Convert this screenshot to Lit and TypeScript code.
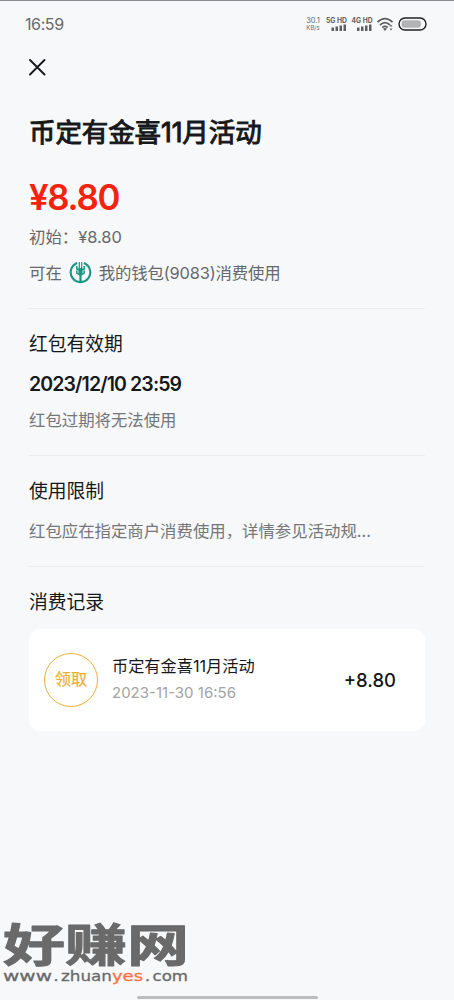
import { LitElement, html, css, svg } from "lit";
import { customElement } from "lit/decorators.js";

@customElement("status-bar")
class StatusBar extends LitElement {
  static styles = css`
    :host { display: flex; height: 47px; box-sizing: border-box; border-top: 1px solid #8b8b90; padding: 0 26px 0 25px; align-items: center; color: #68696b; }
    .time { font-size: 16px; letter-spacing: -0.4px; flex: 1; }
    .speed { font-size: 7.5px; line-height: 7px; width: 16px; text-align: center; margin-right: 5px; white-space: nowrap; }
    .unit { font-size: 6px; }
    svg { display: block; }
    .net { font-weight: 700; }
  `;
  signal(label: string, x: number) {
    return svg`<g transform="translate(${x} 0)" fill="#5e5f61">
      <text class="net" x="0" y="6.500" font-size="7" textLength="21" lengthAdjust="spacingAndGlyphs">${label} HD</text>
      <path d="M5.500 11.500h2.500v3.500h-2.500zM9.500 10.500h2.500v4.500h-2.500zM13.500 9.500h2.500v5.500h-2.500zM17.500 8.500h2.500v6.500h-2.500z"/></g>`;
  }
  render() {
    return html`<div class="time">16:59</div>
      <div class="speed">30.1<div class="unit">KB/s</div></div>
      <svg width="102" height="16" viewBox="0 0 102 16">
        ${this.signal("5G", 0)}${this.signal("4G", 25.5)}
        <g fill="none" stroke="#5e5f61" stroke-width="1.700">
          <path d="M51.500 6.200Q59 -0.800 66.500 6.200M54 9Q59 4.400 64 9M56.300 11.500Q59 9.200 61.700 11.500"/>
        </g>
        <path d="M57 12.700Q59 11.300 61 12.700L59 15z" fill="#5e5f61"/>
        <path d="M63.500 10.500l1.500-2 1.500 2zM63.500 12.500l1.500 2 1.500-2z" fill="#5e5f61"/>
        <rect x="73" y="2" width="27" height="12" rx="6" fill="none" stroke="#202022" stroke-width="1.400"/>
        <rect x="75.500" y="4.200" width="19.500" height="7.600" rx="3" fill="#b4b4b6"/>
      </svg>`;
  }
}

@customElement("bank-mark")
class BankMark extends LitElement {
  static styles = css`:host { display: block; width: 23px; height: 23px; margin-top: -2px; } svg { display: block; }`;
  render() {
    return html`<svg width="23" height="23" viewBox="0 0 23 23" fill="none" stroke="#17977f">
      <path d="M8.200 2.100A9.800 9.800 0 1 0 14.800 2.100" stroke-width="2.100"/>
      <path d="M11.500 14V21" stroke-width="2.200"/>
      <path d="M10.300 1V8M12.700 1V8" stroke-width="1.200"/>
      <path d="M7.800 5V8L10 9.200M15.200 5V8L13 9.200M7.800 9.500V12L10 13.500M15.200 9.500V12L13 13.500" stroke-width="1.500"/>
      <path d="M9.500 7h4v6.500l-2 2-2-2z" fill="#17977f" stroke="none"/>
    </svg>`;
  }
}

@customElement("site-watermark")
class SiteWatermark extends LitElement {
  static styles = css`
    :host { display: block; width: 190px; height: 68px; }
    svg { display: block; overflow: visible; }
    .name { font: 700 45.500px "Liberation Sans", "Noto Sans CJK SC", sans-serif; }
    .url { font: 400 14.500px "DejaVu Sans", sans-serif; }
  `;
  part2(text: string, x: number, width: number, color = "#6a6a6a") {
    return svg`<text class="url" x=${x} y="61" textLength=${width} lengthAdjust="spacingAndGlyphs" fill=${color} stroke=${color} stroke-width="0.300">${text}</text>`;
  }
  render() {
    return html`<svg width="190" height="68" viewBox="0 0 190 68" fill="#6a6a6a">
      <text class="name" x="3" y="42" textLength="186" lengthAdjust="spacingAndGlyphs" stroke="#6a6a6a" stroke-width="1" stroke-linejoin="round">好赚网</text>
      ${this.part2("www", 3, 49)}${this.part2(".", 53.5, 5)}${this.part2("zhuan", 61, 51)}
      ${this.part2("yes", 112, 31, "#ff7044")}${this.part2(".", 145, 5)}${this.part2("com", 152.5, 35.5)}
    </svg>`;
  }
}

@customElement("app-root")
class AppRoot extends LitElement {
  static styles = css`
    :host { display: flex; flex-direction: column; position: relative; height: 1000px; overflow: hidden; background: #f6f8fa; color: #17181a; font-family: Inter, "Noto Sans CJK SC", sans-serif; white-space: nowrap; }
    .close { display: block; margin: 12px 0 0 29px; }
    main { padding: 0 29px; }
    h1, h2, p { margin: 0; }
    h1 { margin-top: 36px; font-size: 26.500px; line-height: 40px; font-weight: 400; -webkit-text-stroke: 1px currentColor; letter-spacing: -0.1px; }
    .amount { margin-top: 23px; line-height: 44px; font-size: 34.800px; font-weight: 600; letter-spacing: -1.3px; color: #f5230e; }
    .muted { font-size: 16.400px; line-height: 24px; color: #747678; }
    .initial { margin-top: 6px; color: #66686a; }
    .wallet { display: flex; align-items: center; gap: 7px; margin-top: 12px; color: #66686a; }
    .account { letter-spacing: -0.15px; }
    section { border-top: 1px solid #ebedef; }
    .limits { margin-top: 23px; }
    h2 { margin-top: 22px; font-size: 18.800px; line-height: 28px; font-weight: 400; }
    .expires { margin-top: 11px; font-size: 19.500px; line-height: 28px; font-weight: 600; letter-spacing: -0.88px; }
    .note { margin-top: 10px; }
    .rule { margin-top: 13px; }
    .card { display: flex; align-items: center; box-sizing: border-box; height: 102px; margin-top: 12px; padding: 0 29px 0 15px; border-radius: 11px; background: #fff; }
    .badge { box-sizing: border-box; width: 54px; height: 54px; border: 1.500px solid #edb032; border-radius: 50%; color: #edb032; font-size: 16.200px; -webkit-text-stroke: 0.200px currentColor; line-height: 51px; text-align: center; }
    .detail { flex: 1; margin-left: 14px; }
    .name { font-size: 16.200px; line-height: 26px; }
    .date { font-size: 15px; line-height: 28px; color: #a3a4a5; }
    .plus { font-size: 18.500px; font-weight: 500; }
    site-watermark { position: absolute; left: 0; top: 920px; }
    .home { position: absolute; left: 137px; bottom: 1px; width: 181px; height: 3px; border-radius: 2px; background: #bcbdbf; }
  `;
  render() {
    return html`
      <status-bar></status-bar>
      <svg class="close" width="17" height="17" viewBox="0 0 17 17" fill="none" stroke="#17181a" stroke-width="1.900" stroke-linecap="round"><path d="M1 1L15.500 15.500M15.500 1L1 15.500"/></svg>
      <main>
        <h1>币定有金喜11月活动</h1>
        <p class="amount">¥8.80</p>
        <p class="muted initial">初始：¥8.80</p>
        <p class="muted wallet"><span>可在</span><bank-mark></bank-mark><span class="account">我的钱包(9083)消费使用</span></p>
        <section class="limits">
          <h2>红包有效期</h2>
          <p class="expires">2023/12/10 23:59</p>
          <p class="muted note">红包过期将无法使用</p>
        </section>
        <section class="limits">
          <h2>使用限制</h2>
          <p class="muted rule">红包应在指定商户消费使用，详情参见活动规...</p>
        </section>
        <section class="limits">
          <h2>消费记录</h2>
          <div class="card">
            <div class="badge">领取</div>
            <div class="detail"><div class="name">币定有金喜11月活动</div><div class="date">2023-11-30 16:56</div></div>
            <div class="plus">+8.80</div>
          </div>
        </section>
      </main>
      <site-watermark></site-watermark>
      <div class="home"></div>`;
  }
}
